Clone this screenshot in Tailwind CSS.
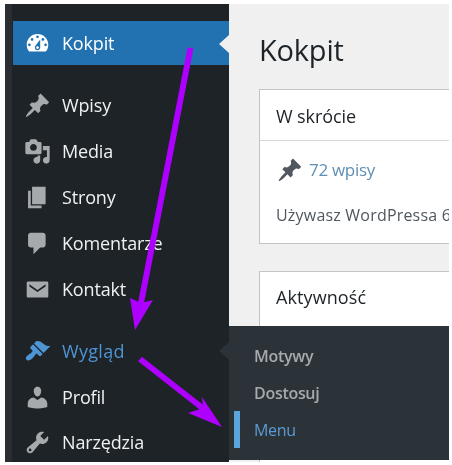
<!DOCTYPE html>
<html lang="pl">
<head>
  <meta charset="UTF-8" />
  <script src="https://cdn.jsdelivr.net/npm/@tailwindcss/browser@4"></script>
  <title>Kokpit</title>
</head>
<body class="bg-white">
  <div class="relative w-[452px] h-[465px] overflow-hidden bg-white pt-[4px] pl-[5px] pr-[3px] pb-[3px] font-['Open_Sans',sans-serif] blur-[0.4px]">
    <div class="relative flex h-[458px] overflow-hidden">

      <!-- sidebar -->
      <div class="w-[224px] shrink-0 bg-[#1d2327] pl-[1px] pt-[17px] border-l-[7px] border-[#2a2e33] box-border text-[18px] tracking-[-0.15px] text-[#f0f0f1]">
        <div class="relative flex items-center h-[44px] bg-[#2271b1] text-white">
          <svg class="absolute left-[11px] w-[27px] h-[27px] fill-current" viewBox="0 0 20 20"><path d="M3.76 16h12.48c1.1-1.37 1.76-3.11 1.76-5 0-4.42-3.58-8-8-8s-8 3.58-8 8c0 1.89.66 3.63 1.76 5zM10 4c.55 0 1 .45 1 1s-.45 1-1 1-1-.45-1-1 .45-1 1-1zM6 6c.55 0 1 .45 1 1s-.45 1-1 1-1-.45-1-1 .45-1 1-1zm8 0c.55 0 1 .45 1 1s-.45 1-1 1-1-.45-1-1 .45-1 1-1zm-5.37 5.55L12 7v6c0 1.1-.9 2-2 2s-2-.9-2-2c0-.57.24-1.08.63-1.45zM4 10c.55 0 1 .45 1 1s-.45 1-1 1-1-.45-1-1 .45-1 1-1zm12 0c.55 0 1 .45 1 1s-.45 1-1 1-1-.45-1-1 .45-1 1-1zm-5 3c0-.55-.45-1-1-1s-1 .45-1 1 .45 1 1 1 1-.45 1-1z"/></svg>
          <span class="pl-[49px]">Kokpit</span>
          <div class="absolute right-0 top-[14px] w-0 h-0 border-y-[9px] border-y-transparent border-r-[10px] border-r-[#f0f0f1]"></div>
        </div>

        <div class="mt-[17px]">
          <div class="relative flex items-center h-[46px]">
            <svg class="absolute left-[11px] w-[27px] h-[27px] fill-[#a7aaad]" viewBox="0 0 20 20"><path d="M10.44 3.02l1.82-1.82 6.36 6.35-1.83 1.82c-1.05-.68-2.48-.57-3.41.36l-.75.75c-.92.93-1.04 2.35-.35 3.41l-1.83 1.82-2.41-2.41-2.8 2.79c-.42.42-3.38 2.71-3.8 2.29s1.86-3.39 2.28-3.81l2.79-2.79L4.1 9.36l1.83-1.82c1.05.69 2.48.57 3.41-.36l.75-.75c.93-.92 1.04-2.35.35-3.41z"/></svg>
            <span class="pl-[49px]">Wpisy</span>
          </div>
          <div class="relative flex items-center h-[46px]">
            <svg class="absolute left-[11px] w-[27px] h-[27px] fill-[#a7aaad]" viewBox="0 0 20 20"><path d="M13 11V4c0-.55-.45-1-1-1h-1.67L9 1H5L3.67 3H2c-.55 0-1 .45-1 1v7c0 .55.45 1 1 1h10c.55 0 1-.45 1-1zM7 4.5c1.38 0 2.5 1.12 2.5 2.5S8.38 9.5 7 9.5 4.5 8.38 4.5 7 5.62 4.5 7 4.5zM14 6h5v10.5c0 1.38-1.12 2.5-2.5 2.5S14 17.88 14 16.5s1.12-2.5 2.5-2.5c.17 0 .34.02.5.05V9h-3V6zm-4 8.05V13h2v3.5c0 1.38-1.12 2.5-2.5 2.5S7 17.88 7 16.5 8.12 14 9.5 14c.17 0 .34.02.5.05z"/></svg>
            <span class="pl-[49px]">Media</span>
          </div>
          <div class="relative flex items-center h-[46px]">
            <svg class="absolute left-[11px] w-[27px] h-[27px] fill-[#a7aaad]" viewBox="0 0 20 20"><path d="M6 15V2h10v13H6zm-1 1h8v2H3V5h2v11z"/></svg>
            <span class="pl-[49px]">Strony</span>
          </div>
          <div class="relative flex items-center h-[46px]">
            <svg class="absolute left-[11px] w-[27px] h-[27px] fill-[#a7aaad]" viewBox="0 0 20 20"><path d="M5 2h9c1.1 0 2 .9 2 2v7c0 1.1-.9 2-2 2h-2l-5 5v-5H5c-1.1 0-2-.9-2-2V4c0-1.1.9-2 2-2z"/></svg>
            <span class="pl-[49px]">Komentarze</span>
          </div>
          <div class="relative flex items-center h-[46px]">
            <svg class="absolute left-[11px] w-[27px] h-[27px] fill-[#a7aaad]" viewBox="0 0 20 20"><path fill-rule="evenodd" d="M3 4h14c.55 0 1 .45 1 1v10c0 .55-.45 1-1 1H3c-.55 0-1-.45-1-1V5c0-.55.45-1 1-1zm13 2.2L10 10.4 4 6.2v1.5l6 4.2 6-4.2z"/></svg>
            <span class="pl-[49px]">Kontakt</span>
          </div>
        </div>

        <div class="mt-[16px]">
          <div class="relative flex items-center h-[46px] text-[#4f94d4]">
            <svg class="absolute left-[11px] w-[27px] h-[27px] fill-current" viewBox="0 0 20 20"><path d="M14.48 11.06L7.41 3.99l1.5-1.5c.5-.56 2.3-.47 3.51.32 1.21.8 1.43 1.28 2.91 2.1 1.18.64 2.45 1.26 4.45.85zm-.71.71L6.7 4.7 4.93 6.47c-.39.39-.39 1.02 0 1.41l1.06 1.06c.39.39.39 1.03 0 1.42-.6.6-1.43 1.11-2.21 1.69-.35.26-.7.53-1.01.84C1.43 13.23.91 15.24 1.84 16.16c.92.93 2.93.41 4.27-.93.31-.31.58-.66.85-1.01.57-.78 1.08-1.61 1.69-2.21.39-.39 1.02-.39 1.41 0l1.06 1.06c.39.39 1.02.39 1.41 0z"/></svg>
            <span class="pl-[49px] tracking-[0.3px]">Wygląd</span>
            <div class="absolute right-0 top-[14px] w-0 h-0 border-y-[9px] border-y-transparent border-r-[10px] border-r-[#2c3338]"></div>
          </div>
          <div class="relative flex items-center h-[46px]">
            <svg class="absolute left-[11px] w-[27px] h-[27px] fill-[#a7aaad]" viewBox="0 0 20 20"><path d="M10 9.25c-2.27 0-2.73-3.44-2.73-3.44C7 4.02 7.82 2 9.97 2c2.16 0 2.98 2.02 2.71 3.81 0 0-.41 3.44-2.68 3.44zm0 2.57L12.72 10c2.39 0 4.52 2.33 4.52 4.53v2.49s-3.65 1.13-7.24 1.13c-3.65 0-7.24-1.13-7.24-1.13v-2.49c0-2.25 1.94-4.48 4.47-4.48z"/></svg>
            <span class="pl-[49px]">Profil</span>
          </div>
          <div class="relative flex items-center h-[44px]">
            <svg class="absolute left-[11px] w-[27px] h-[27px] fill-[#a7aaad]" viewBox="0 0 20 20"><path d="M16.68 9.77c-1.34 1.34-3.3 1.67-4.95.99l-5.41 6.52c-.99.99-2.59.99-3.58 0s-.99-2.59 0-3.57l6.52-5.42c-.68-1.65-.35-3.61.99-4.95 1.28-1.28 3.12-1.62 4.72-1.06l-2.89 2.89 2.82 2.82 2.86-2.87c.53 1.58.18 3.39-1.08 4.65zM3.81 16.21c.4.39 1.04.39 1.43 0 .4-.4.4-1.04 0-1.43-.39-.4-1.03-.4-1.43 0-.39.39-.39 1.03 0 1.43z"/></svg>
            <span class="pl-[49px]">Narzędzia</span>
          </div>
        </div>
      </div>

      <!-- main -->
      <div class="relative flex-1 min-w-0 overflow-hidden bg-[#f0f0f1] pl-[30px] pt-[26px] text-[#1d2327]">
        <h1 class="text-[29px] leading-[40px] tracking-[-0.2px]">Kokpit</h1>
        <div class="mt-[19px] w-[240px] h-[155px] bg-white border-[1.5px] border-[#c3c4c7]">
          <div class="h-[51px] flex items-center pl-[16px] pt-[2px] border-b-[1.5px] border-[#d8d8da] text-[18px] tracking-[-0.1px]">W skrócie</div>
          <div class="flex items-center gap-[6px] pl-[17px] pt-[16px] text-[17px] tracking-[-0.3px] text-[#5d8fb5]">
            <svg class="w-[26px] h-[26px] fill-[#50575e]" viewBox="0 0 20 20"><path d="M10.44 3.02l1.82-1.82 6.36 6.35-1.83 1.82c-1.05-.68-2.48-.57-3.41.36l-.75.75c-.92.93-1.04 2.35-.35 3.41l-1.83 1.82-2.41-2.41-2.8 2.79c-.42.42-3.38 2.71-3.8 2.29s1.86-3.39 2.28-3.81l2.79-2.79L4.1 9.36l1.83-1.82c1.05.69 2.48.57 3.41-.36l.75-.75c.93-.92 1.04-2.35.35-3.41z"/></svg>
            <span>72 wpisy</span>
          </div>
          <div class="pl-[16px] pt-[20px] text-[16px] tracking-[0.2px] text-[#50575e] whitespace-nowrap">Używasz WordPressa 6.1</div>
        </div>
        <div class="mt-[27px] w-[240px] h-[200px] bg-white border-[1.5px] border-[#c3c4c7]">
          <div class="h-[51px] flex items-center pl-[16px] text-[18px] tracking-[0.1px]">Aktywność</div>
        </div>

        <!-- flyout -->
        <div class="absolute left-0 right-0 top-[322px] h-[134px] bg-[#2c3338] pt-[11px] text-[16px] tracking-[-0.3px] text-[#a7aaad] font-semibold">
          <div class="flex items-center h-[37px] pl-[25px]">Motywy</div>
          <div class="flex items-center h-[37px] pl-[25px]">Dostosuj</div>
          <div class="relative flex items-center h-[37px] pl-[25px] font-medium text-[#5b9bd5]">
            <div class="absolute left-[5px] top-[0px] w-[6px] h-[37px] bg-[#5aa5dc]"></div>
            Menu
          </div>
        </div>
      </div>

      <!-- annotation arrows -->
      <svg class="absolute inset-0 w-full h-full" viewBox="5 4 444 458">
        <path d="M190.5 48 L141 303" stroke="#ad00ff" stroke-width="6" fill="none"/>
        <path d="M135 330 L130 298 L141 303 L153 300 Z" fill="#ad00ff"/>
        <path d="M140 359 L205 410" stroke="#ad00ff" stroke-width="6" fill="none"/>
        <path d="M222 427 L188 413 L203 408 L202 397 Z" fill="#ad00ff"/>
      </svg>
    </div>
  </div>
</body>
</html>
